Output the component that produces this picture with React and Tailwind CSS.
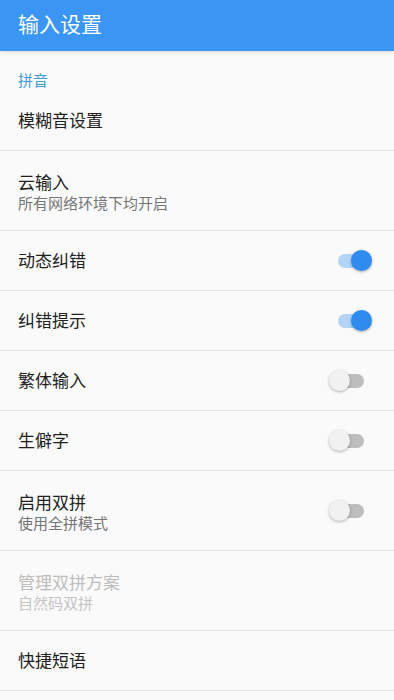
import { useState } from "react";

const font = { fontFamily: '"Noto Sans CJK SC", "Noto Sans", sans-serif' };

function Toggle({ on }) {
  return (
    <div className="relative w-[43px] h-[22px] shrink-0">
      <div
        className={`absolute left-[9px] top-[4px] w-[26px] h-[14px] rounded-full ${
          on ? "bg-[#b3d4f7]" : "bg-[#bdbdbd]"
        }`}
      />
      <div
        className={`absolute top-0 w-[21px] h-[21px] rounded-full shadow-[0_1px_3px_rgba(0,0,0,0.3)] ${
          on ? "left-[22px] bg-[#2f8cee]" : "left-0 bg-[#f1f1f1]"
        }`}
      />
    </div>
  );
}

function Row({ title, sub, toggle, disabled, tall }) {
  return (
    <div
      className={`flex items-start justify-between border-b-[1.5px] border-[#e4e4e4] pl-[18px] pr-[22px] ${
        tall ? "h-[80px]" : "h-[60px]"
      }`}
    >
      <div className={`flex flex-col ${sub ? "pt-[20px]" : "pt-[18px]"}`}>
        <div
          className={`text-[17px] leading-[22px] ${disabled ? "text-[#bdbdbd]" : "text-[#212121]"}`}
        >
          {title}
        </div>
        {sub && (
          <div
            className={`text-[15px] leading-[20px] ${disabled ? "text-[#c4c4c4]" : "text-[#757575]"}`}
          >
            {sub}
          </div>
        )}
      </div>
      {toggle !== undefined && (
        <div className="self-center">
          <Toggle on={toggle} />
        </div>
      )}
    </div>
  );
}

export default function App() {
  const [rows] = useState([
    { title: "模糊音设置" },
    { title: "云输入", sub: "所有网络环境下均开启", tall: true },
    { title: "动态纠错", toggle: true },
    { title: "纠错提示", toggle: true },
    { title: "繁体输入", toggle: false },
    { title: "生僻字", toggle: false },
    { title: "启用双拼", sub: "使用全拼模式", toggle: false, tall: true },
    { title: "管理双拼方案", sub: "自然码双拼", disabled: true, tall: true },
    { title: "快捷短语" },
    { title: "" },
  ]);

  return (
    <div className="w-[394px] h-[700px] overflow-hidden bg-[#fafafa]" style={font}>
      <div className="h-[51px] bg-[#3a95f3] flex items-center pl-[18px] shadow-[0_1px_3px_rgba(0,0,0,0.15)] relative">
        <span className="text-white text-[21px] leading-[28px] -mt-[6px]">输入设置</span>
      </div>
      <div className="h-[40px] pl-[18px] pt-[19px]">
        <div className="text-[15px] leading-[20px] text-[#3d9bd8]">拼音</div>
      </div>
      {rows.map((r, i) => (
        <Row key={i} {...r} />
      ))}
    </div>
  );
}
